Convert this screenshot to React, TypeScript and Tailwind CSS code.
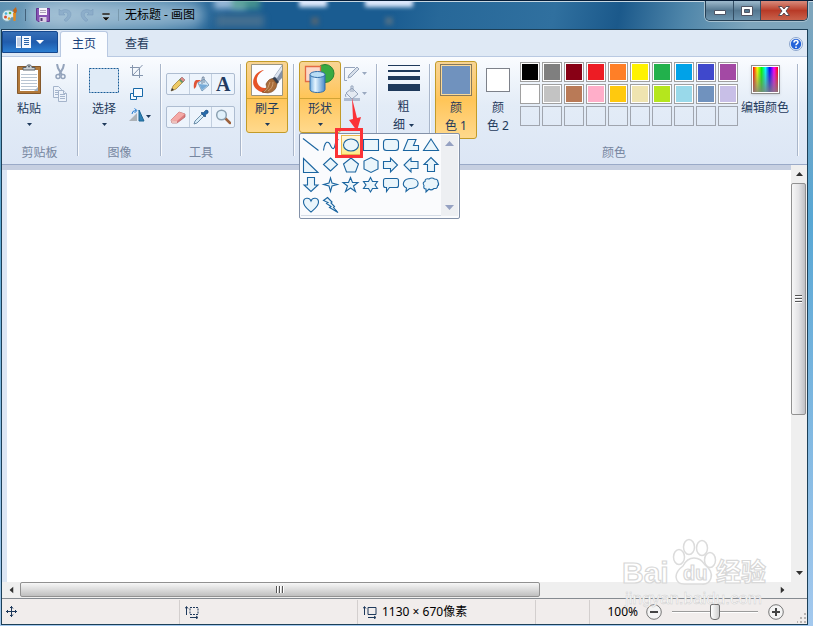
import type { ReactNode } from "react";
import clsx from "clsx";

const palette = [
  ["#000000", "#7f7f7f", "#880015", "#ed1c24", "#ff7f27", "#fff200", "#22b14c", "#00a2e8", "#3f48cc", "#a349a4"],
  ["#ffffff", "#c3c3c3", "#b97a57", "#ffaec9", "#ffc90e", "#efe4b0", "#b5e61d", "#99d9ea", "#7092be", "#c8bfe7"],
];

const shapes: { name: string; d: string; open?: boolean }[] = [
  { name: "直线", d: "M2 3.5L17.5 15.5", open: true },
  { name: "曲线", d: "M2.5 15.5C3 10 5 6 7.5 7.500C10 9 10 14.500 12.500 13.500C15 12.500 13 5 17.500 4.500", open: true },
  { name: "椭圆形", d: "M2.500 10a7.500 6 0 1 0 15 0a7.500 6 0 1 0 -15 0z" },
  { name: "矩形", d: "M2.500 4.500h15v11h-15z" },
  { name: "圆角矩形", d: "M5.500 4.500h9q3 0 3 3v5q0 3 -3 3h-9q-3 0 -3 -3v-5q0 -3 3 -3z" },
  { name: "多边形", d: "M2.500 15.500L7 4.500H15L12.500 10.500H17.500V15.500z" },
  { name: "三角形", d: "M10 4L17.500 15.500H2.500z" },
  { name: "直角三角形", d: "M2.500 3.500L17 17.500H2.500z" },
  { name: "菱形", d: "M9.500 3L16.500 9.500L9.500 16L2.500 9.500z" },
  { name: "五边形", d: "M10 3L17.500 9L14.500 17H5.500L2.500 9z" },
  { name: "六边形", d: "M10 2.500L17 6V14L10 17.500L3 14V6z" },
  { name: "右箭头", d: "M2.500 6.500H9.500V3L16.500 10L9.500 17V13.500H2.500z" },
  { name: "左箭头", d: "M17 6.500H10V3L3 10L10 17V13.500H17z" },
  { name: "上箭头", d: "M6.500 16.500V9.500H3L10 2.500L17 9.500H13.500V16.500z" },
  { name: "下箭头", d: "M6.500 2.500V10H3L10 16.500L17 10H13.500V2.500z" },
  { name: "四角星", d: "M9.500 3L11 8L16.500 9.500L11 11L9.500 16.500L8 11L2.500 9.500L8 8z" },
  { name: "五角星", d: "M9.500 2.500L11.500 7.500H17L12.500 11L14.500 16.500L9.500 13L4.500 16.500L6.500 11L2 7.500H7.500z" },
  { name: "六角星", d: "M9.500 2.500L11.500 6.500H16.500L14 10L16.500 13.500H11.500L9.500 17L7.500 13.500H2.500L5 10L2.500 6.500H7.500z" },
  { name: "圆角矩形标注", d: "M4.500 3.500h11q2 0 2 2v5q0 2 -2 2h-7l-3 4v-4h-1q-2 0 -2 -2v-5q0 -2 2 -2z" },
  { name: "椭圆形标注", d: "M5.500 13C0 10.500 2 3.500 10 3.500C19.500 3.500 19.500 13.500 10 13.500L8.500 13.500L5 16.500z" },
  { name: "云形标注", d: "M5 14Q2 14 3 10.500Q1 7.500 4 6.500Q4 3 8 4Q11 2 13.500 4Q17 4 17 7Q18.500 10 16.500 11Q16.500 14 13 13.500Q10 16 8 14L5 17z" },
  { name: "心形", d: "M10 17C6 13.500 2.500 11.500 2.500 7C2.500 2.500 8.500 2 10 6C11.500 2 17.500 2.500 17.500 7C17.500 11.500 14 13.500 10 17z" },
  { name: "闪电形", d: "M6.500 2.500L11 7L10 8L13.500 11.500L12.500 12.500L17 17.500L8.500 12.500L10 11.500L5.500 8.500L7 7.500L2.500 5.500z" },
];

function Caret({ className = "h-[3px] w-[5px]" }: { className?: string }) {
  return (
    <svg viewBox="0 0 6 3" preserveAspectRatio="none" className={className} fill="currentColor">
      <path d="M0 0h6L3 3z" />
    </svg>
  );
}

function Separator() {
  return <div className="mt-[3px] h-[92px] w-0.5 shrink-0 border-r border-l border-r-white/80 border-l-[#a9b6ca]" />;
}

function Group({ label, className, children }: { label?: string; className: string; children: ReactNode }) {
  return (
    <section className="flex h-[100px] shrink-0 flex-col justify-between">
      <div className={clsx("flex items-start", className)}>{children}</div>
      {label && <h2 className="text-center text-xs text-[#7686a0]">{label}</h2>}
    </section>
  );
}

function SplitButton({ label, children }: { label: string; children: ReactNode }) {
  return (
    <button className="flex h-[72px] w-[42px] flex-col items-center rounded-[3px] border border-[#c29b29] bg-linear-to-b from-[#f8d494] via-[#ffc558] to-[#ffd98c]">
      <span className="flex w-full justify-center border-b border-[#d0a336] py-0.5">{children}</span>
      <span className="mt-0.5 text-xs">{label}</span>
      <Caret className="mt-1.5 h-[3px] w-[5px]" />
    </button>
  );
}

function PaintLogo() {
  return (
    <svg viewBox="0 0 16 16" className="h-4 w-4">
      <path d="M6 3C2 3 0 6 0 9c0 4 3 6 7 5c2-.6 1-2 2-3c1-1 4 0 4-3c0-3-3-5-7-5z" fill="#d9edf2" stroke="#74a0b2" />
      <circle cx="4" cy="6.500" r="1.300" fill="#46b1d6" />
      <circle cx="8" cy="6" r="1.300" fill="#5cb249" />
      <circle cx="3.500" cy="10" r="1.500" fill="#d94f34" />
      <circle cx="7" cy="11.500" r="1.300" fill="#e5a62b" />
      <path d="M11 6h3l-.5 8h-2z" fill="#e28a20" />
      <path d="M12 6L11 3L14 0L15 4L14 6z" fill="#c26518" />
    </svg>
  );
}

function SaveIcon() {
  return (
    <svg viewBox="0 0 14 14" className="h-3.5 w-3.5">
      <path d="M.5.5h13v13H2L.5 12z" fill="#8754b4" stroke="#643690" />
      <path d="M3 0h8v7H3z" fill="#f6f2fa" />
      <path d="M4 2.500h6M4 4.500h6" stroke="#aaa0b8" />
      <path d="M3.500 9h7v5h-7z" fill="#d8cfe4" />
      <path d="M4.500 10h2v3h-2z" fill="#51336f" />
    </svg>
  );
}

function UndoIcon({ className }: { className?: string }) {
  return (
    <svg viewBox="0 0 14 14" className={clsx("h-3.5 w-3.5 opacity-70", className)}>
      <path d="M1 1v6h6L5 5c4-2 6 1 4 4l-3 3l2 1.500c6-4 6-9 3-11C8 1 5 1.500 3 3z" fill="#88a9c8" stroke="#6e92b5" strokeWidth=".6" />
    </svg>
  );
}

function WindowButtons() {
  return (
    <div className="ml-auto flex h-5 self-start overflow-hidden rounded-b-[5px] border border-t-0 border-[#253f55] shadow-[0_0_0_1px_#a7c1d0]">
      <button aria-label="最小化" className="flex w-7 items-center justify-center border-r border-[#344e64] bg-linear-to-b from-[#9fbbce] via-[#547790] to-[#6d94ae]">
        <svg viewBox="0 0 12 5" className="mt-1 h-[5px] w-3"><path d="M.5.5h11v4H.5z" fill="#fff" stroke="#505565" /></svg>
      </button>
      <button aria-label="最大化" className="flex w-[27px] items-center justify-center border-r border-[#344e64] bg-linear-to-b from-[#9fbbce] via-[#547790] to-[#6d94ae]">
        <svg viewBox="0 0 12 10" className="h-2.5 w-3"><path d="M.5.500h11v9H.5zM3.500 3.500v3h5v-3z" fill="#fff" fillRule="evenodd" stroke="#505565" /></svg>
      </button>
      <button aria-label="关闭" className="flex w-[46px] items-center justify-center bg-linear-to-b from-[#d88b7c] via-[#b83a27] to-[#c9614b]">
        <svg viewBox="0 0 12 10" className="h-2.5 w-3"><path d="M.5.500h3.500l2 2.500l2-2.500h3.500L8 5l3.500 4.500H8L6 7L4 9.500H.5L4 5z" fill="#fff" stroke="#5a4a52" /></svg>
      </button>
    </div>
  );
}

function TitleBar() {
  return (
    <header className="relative flex h-[29px] items-center overflow-hidden border-t border-[#061d38] bg-[linear-gradient(100deg,#5f92b3_0%,#7ba3bf_8%,#4f86ac_20%,#1a5c91_28%,#1a5c91_48%,#276899_54%,#30709f_68%,#1b598b_76%,#4f86aa_84%,#7ea5bc_92%)] pr-[5px] pl-0.5 shadow-[inset_0_1px_0_#c6d7e2]">
      <div className="absolute top-0.5 left-7 h-6 w-44 rounded-full bg-[#c7dce9]/50 blur-[6px]" />
      <div className="absolute -top-1 left-[214px] h-3 w-8 bg-[#b8d0ea]/80 blur-[3px]" />
      <div className="absolute -top-1 left-[232px] h-3 w-7 bg-[#4f9f8d]/80 blur-[3px]" />
      <div className="absolute top-3.5 left-[216px] h-3 w-12 bg-[#607b90]/60 blur-[3px]" />
      <div className="absolute -top-1 left-[299px] h-2.5 w-7 bg-[#dce8fc] blur-[2px]" />
      <div className="absolute -top-1 left-[365px] h-2.5 w-12 bg-[#dce8fc] blur-[2px]" />
      <div className="absolute top-4 left-[311px] h-2 w-2 bg-[#4a6478] blur-[2px]" />
      <div className="absolute top-4 left-[385px] h-2 w-2 bg-[#4a6e88] blur-[2px]" />
      <div className="relative flex h-full w-full items-center">
        <PaintLogo />
        <span className="ml-[7px] h-3 w-px bg-[#42617a]" />
        <div className="ml-2.5 flex items-center gap-2">
          <button aria-label="保存"><SaveIcon /></button>
          <button aria-label="撤消"><UndoIcon /></button>
          <button aria-label="重做"><UndoIcon className="-scale-x-100" /></button>
          <button aria-label="自定义快速访问工具栏">
            <svg viewBox="0 0 8 8" className="mt-1 h-2 w-2"><path d="M0 0h8v2H0zM0 4h8L4 8z" fill="#111" stroke="#dce8ef" strokeWidth=".5" /></svg>
          </button>
        </div>
        <span className="ml-2 h-3 w-px bg-[#7898ad]" />
        <h1 className="ml-1.5 text-xs text-black">无标题 - 画图</h1>
        <WindowButtons />
      </div>
    </header>
  );
}

function TabRow() {
  return (
    <nav className="flex h-[27px] border-b border-[#b9c9e2] bg-[#dfe9f5] pt-px">
      <button aria-label="画图菜单" className="flex h-[22px] w-14 items-center justify-center gap-[5px] rounded-tr-xs border border-[#16488e] bg-linear-to-b from-[#366fb7] via-[#205cac] to-[#2c7fd2] text-white">
        <svg viewBox="0 0 15 12" className="h-3 w-[15px]">
          <path d="M0 0h15v12H0z" fill="#f5f9ff" />
          <path d="M1 1.500h4v9H1z" fill="#bdcde5" />
          <path d="M5.500 0v12M8 2.500h5M8 4.500h5M8 6.500h5M8 8.500h5" stroke="#2b64a8" />
        </svg>
        <Caret className="h-1 w-2" />
      </button>
      <button className="-mb-px ml-0.5 w-12 rounded-t-[3px] border border-b-0 border-[#b9c9e2] bg-[#fafcff] pb-px text-xs text-[#163f7a]">主页</button>
      <button className="ml-1 w-[50px] text-xs">查看</button>
      <button aria-label="帮助" className="mr-1 ml-auto">
        <svg viewBox="0 0 14 14" className="h-3.5 w-3.5">
          <circle cx="7" cy="7" r="6.500" fill="#eef4fc" stroke="#8ca5cc" />
          <circle cx="7" cy="7" r="5.200" fill="#2463d9" />
          <path d="M5 5.500C5 3 9 3 9 5.200C9 6.700 7 6.500 7 8.300" fill="none" stroke="#fff" strokeWidth="1.500" />
          <path d="M6.200 9.500h1.600v1.500H6.200z" fill="#fff" />
        </svg>
      </button>
    </nav>
  );
}

function ClipboardGroup() {
  return (
    <Group label="剪贴板" className="w-[75px] pl-2">
      <button className="flex w-[38px] flex-col items-center pt-[3px] text-xs">
        <svg viewBox="0 0 26 32" className="h-8 w-[26px]">
          <path d="M1.500 2.500h23v27h-23z" fill="#b2793a" stroke="#85592b" />
          <path d="M4 6h18v21H4z" fill="#fff" />
          <path d="M5 10.500h16M5 13.500h16M5 16.500h16M5 19.500h16M5 22.500h16M5 25.500h16" stroke="#b9c5d2" />
          <path d="M18 27l4-4v4z" fill="#9dafc2" />
          <path d="M7 6V3.500h3C10 0 16 0 16 3.500h3V6z" fill="#c9d0d6" stroke="#59636c" />
          <circle cx="13" cy="2.500" r="1" fill="#59636c" />
        </svg>
        <span className="mt-[5px]">粘贴</span>
        <Caret className="mt-1.5 h-[3px] w-[5px]" />
      </button>
      <div className="ml-1 flex flex-col gap-1.5 pt-[3px]">
        <button aria-label="剪切">
          <svg viewBox="0 0 16 16" className="h-4 w-4" fill="none" stroke="#94a3bb" strokeWidth="1.500">
            <path d="M5 0L6 4L10 11M12 0L11 4L7 11" strokeWidth="2" />
            <circle cx="6" cy="12.500" r="2" /><circle cx="11" cy="12.500" r="2" />
          </svg>
        </button>
        <button aria-label="复制">
          <svg viewBox="0 0 16 16" className="h-4 w-4" fill="#edf3fb" stroke="#a4b4cb">
            <path d="M1.500.5h5l3 3v8h-8z" /><path d="M3 4.500h3M3 6.500h3M3 8.500h3" />
            <path d="M6.500 4.500h5l3 3v8h-8z" /><path d="M8 8.500h5M8 10.500h5M8 12.500h5M11.500 4.500v3h3" />
          </svg>
        </button>
      </div>
    </Group>
  );
}

function ImageGroup() {
  return (
    <Group label="图像" className="w-[81px] pl-[7px]">
      <button className="flex w-9 flex-col items-center pt-[3px] text-xs">
        <svg viewBox="0 0 32 32" className="h-8 w-8">
          <path d="M1.500 4.500h29v24h-29z" fill="#e0ebf7" stroke="#175b96" strokeDasharray="2 1" />
        </svg>
        <span className="mt-[5px]">选择</span>
        <Caret className="mt-1.5 h-[3px] w-[5px]" />
      </button>
      <div className="ml-[7px] flex flex-col gap-1.5 pt-[3px]">
        <button aria-label="裁剪">
          <svg viewBox="0 0 16 16" className="h-4 w-4" fill="none" stroke="#8696ae">
            <path d="M3.500 1v10.500H14M1 3.500h9.500V14M4 11L13.500 1" />
          </svg>
        </button>
        <button aria-label="重新调整大小">
          <svg viewBox="0 0 16 16" className="h-4 w-4" fill="#f6fbff" stroke="#1768a8">
            <path d="M1.500 7.500h6v6h-6z" /><path d="M4.500 2.500h9v8h-9z" />
          </svg>
        </button>
        <button aria-label="旋转" className="flex items-center gap-px">
          <svg viewBox="0 0 16 16" className="h-4 w-4">
            <path d="M0 13h8V5z" fill="#adb2b7" />
            <path d="M10 2v11h5z" fill="#2e81b5" stroke="#1c6594" />
            <path d="M3 6Q3 2.500 7 2.500M5.500.500L8 2.500L5.500 5" fill="none" stroke="#247bd1" />
          </svg>
          <Caret />
        </button>
      </div>
    </Group>
  );
}

const tools: { name: string; art?: ReactNode; letter?: string }[] = [
  {
    name: "铅笔",
    art: (
      <>
        <path d="M1 15L3 10L11 2L14 5L6 13z" fill="#edcb68" stroke="#9c752c" strokeWidth=".7" />
        <path d="M10 3L12 1L15 4L13 6z" fill="#df8a86" stroke="#8d6969" strokeWidth=".6" />
        <path d="M9.500 3.500L12.500 6.500" stroke="#55956d" strokeWidth="1.500" />
        <path d="M1 15L2 12L4 14z" fill="#343742" />
      </>
    ),
  },
  {
    name: "用颜色填充",
    art: (
      <>
        <path d="M5 7L11 3L16 9L9 15z" fill="#d0e4f3" stroke="#6289ac" strokeWidth=".8" />
        <path d="M6 8L15 9L9 14z" fill="#75aad8" />
        <path d="M9 8V3Q9 0 11 1V7" fill="none" stroke="#7588a0" />
        <path d="M8 4L3 4Q0 6 1 13L3 11L4 7z" fill="#df5437" />
      </>
    ),
  },
  { name: "文本", letter: "A" },
  {
    name: "橡皮擦",
    art: (
      <>
        <path d="M1 11L9 3L15 5L15 8L7 14L2 14z" fill="#dc7c7d" stroke="#b05e62" strokeWidth=".7" />
        <path d="M1 11L9 3L15 5L7 12z" fill="#f5a9a6" />
        <path d="M7 12V14L2 14L1 11z" fill="#edc1bc" />
      </>
    ),
  },
  {
    name: "颜色选取器",
    art: (
      <>
        <path d="M1 15L2 12L9 5L11 7L4 14z" fill="#d7edf9" stroke="#517695" strokeWidth=".8" />
        <path d="M8 4L9 3L10 4L13 1Q16 1 15 4L12 6L13 7L12 8z" fill="#246aab" stroke="#164577" strokeWidth=".6" />
      </>
    ),
  },
  {
    name: "放大镜",
    art: (
      <>
        <path d="M10 9L15 14" stroke="#9d623d" strokeWidth="2.500" strokeLinecap="round" />
        <circle cx="6.500" cy="6" r="4.800" fill="#e1f1fb" stroke="#8ba1b1" strokeWidth="1.500" />
      </>
    ),
  },
];

function ToolsGroup() {
  return (
    <Group label="工具" className="w-[78px] pl-1">
      <div className="flex flex-col gap-[11px] pt-3">
        {[tools.slice(0, 3), tools.slice(3)].map((row, i) => (
          <div key={i} className="flex h-[22px] w-[69px] divide-x divide-[#c2cfdf] rounded-xs border border-[#aebdd1] bg-[#edf4fc]">
            {row.map((tool) => (
              <button key={tool.name} aria-label={tool.name} className="flex flex-1 items-center justify-center">
                {tool.letter ? (
                  <span className="font-['Liberation_Serif',serif] text-xl leading-5 font-bold text-[#223a60]">{tool.letter}</span>
                ) : (
                  <svg viewBox="0 0 16 16" className="h-4 w-4">{tool.art}</svg>
                )}
              </button>
            ))}
          </div>
        ))}
      </div>
    </Group>
  );
}

function BrushGroup() {
  return (
    <Group className="w-[51px] pl-1">
      <SplitButton label="刷子">
        <svg viewBox="0 0 32 32" className="h-8 w-8">
          <path d="M.5.5h31v31H.5z" fill="#fbfcff" stroke="#9c957f" />
          <path d="M13 6C5 7 0 16 3 22C5 26 10 28 13 29C19 29 21 24 15 24C8 25 5 18 6 14C7 10 10 8 13 6z" fill="#e65328" />
          <path d="M22 14L31 1V14L26 19z" fill="#8391a8" />
          <path d="M23 13L31 2V6L26 14z" fill="#dce4f0" />
          <path d="M20 15L24 13L28 18L25 21z" fill="#343f50" />
          <path d="M11 28Q17 26 15 20Q18 14 22 15L26 20Q25 28 17 29z" fill="#a96d3b" stroke="#774c2a" strokeWidth=".6" />
          <path d="M13 28Q18 24 19 18M17 27Q22 24 22 18" fill="none" stroke="#d1a071" />
        </svg>
      </SplitButton>
    </Group>
  );
}

function ShapesMenu() {
  return (
    <div role="menu" aria-label="形状" className="absolute top-[72px] left-0 z-10 flex w-[161px] rounded-xs border border-[#8391a8] bg-[#fafbfd] pt-px pr-px pb-0.5 pl-px">
      <div className="grid w-[140px] auto-rows-[20px] grid-cols-7 border-b border-[#d5dce6]">
        {shapes.map((shape, i) => (
          <button
            key={shape.name}
            role="menuitem"
            aria-label={shape.name}
            className={clsx(i === 2 && "bg-linear-to-b from-[#fff8e6] to-[#ffeb82] ring-1 ring-[#eab84d] ring-inset")}
          >
            <svg viewBox="0 0 20 20" className="h-5 w-5">
              <path d={shape.d} fill={shape.open ? "none" : "#eaf5fb"} stroke="#1b65a0" strokeWidth="1.100" />
            </svg>
          </button>
        ))}
      </div>
      <div className="flex flex-1 flex-col items-center justify-between bg-[#edeff2] py-1.5 text-[#95a1c2]">
        <button aria-label="向上滚动"><Caret className="h-[5px] w-[9px] rotate-180" /></button>
        <button aria-label="向下滚动"><Caret className="h-[5px] w-[9px]" /></button>
      </div>
    </div>
  );
}

function ShapesGroup() {
  return (
    <Group className="w-[81px] pl-1">
      <div className="relative">
        <SplitButton label="形状">
          <svg viewBox="0 0 32 32" className="h-8 w-8">
            <defs>
              <linearGradient id="cylinder">
                <stop stopColor="#73aee0" /><stop offset=".35" stopColor="#e6f5ff" /><stop offset="1" stopColor="#4688c9" />
              </linearGradient>
            </defs>
            <circle cx="21" cy="9.500" r="9" fill="#39aa42" stroke="#278332" />
            <path d="M1.500 2.500h15v15h-15z" fill="#fbd8c9" stroke="#e36b44" strokeWidth="1.300" />
            <path d="M6 10.500v15c0 4 15 4 15 0v-15z" fill="url(#cylinder)" stroke="#336da8" />
            <ellipse cx="13.500" cy="10.500" rx="7.500" ry="3" fill="#b9ddf5" stroke="#336da8" />
          </svg>
        </SplitButton>
        <ShapesMenu />
        {/* callout on the ellipse tool */}
        <div className="absolute top-[67px] left-9 z-20 h-[30px] w-7 border-[3px] border-[#fb3237]" />
        <svg viewBox="0 0 16 34" className="absolute top-[37px] left-[49px] z-20 h-[34px] w-4">
          <path d="M4 0L9 20L13 19L9 33L1 22L5 21z" fill="#fb3237" />
        </svg>
      </div>
      <div className="ml-[3px] flex flex-col gap-1 pt-1 text-[#9aa9c0]">
        <button aria-label="形状轮廓" className="flex items-center gap-0.5">
          <svg viewBox="0 0 16 16" className="h-4 w-4" fill="none" stroke="#94a3bb">
            <path d="M11 2.500H.5v13H3" /><path d="M4 13L5 10L13 2L15 4L7 12z" fill="#d7dfea" />
          </svg>
          <Caret />
        </button>
        <button aria-label="形状填充" className="flex items-center gap-0.5">
          <svg viewBox="0 0 16 16" className="h-4 w-4" stroke="#94a3bb">
            <path d="M0 13h16v3H0z" fill="#aebbd0" stroke="none" />
            <path d="M2 8L8 3L14 9L8 14z" fill="#e4eaf2" /><path d="M7 7V1h2v6M3 8Q0 10 2 12" fill="none" />
          </svg>
          <Caret />
        </button>
      </div>
    </Group>
  );
}

function SizeGroup() {
  return (
    <Group className="w-[51px]">
      <button className="flex w-full flex-col items-center pt-1 text-xs leading-[18px]">
        <span className="flex w-8 flex-col gap-1">
          <span className="h-px bg-[#1e395b]" />
          <span className="h-0.5 bg-[#1e395b]" />
          <span className="h-1 bg-[#1e395b]" />
          <span className="h-[7px] bg-[#1e395b]" />
        </span>
        <span className="mt-[7px]">粗</span>
        <span className="flex items-center gap-1">细<Caret /></span>
      </button>
    </Group>
  );
}

function ColorsGroup() {
  return (
    <Group label="颜色" className="w-[366px] pl-1">
      <button className="flex h-[78px] w-[42px] flex-col items-center rounded-[3px] border border-[#c29b29] bg-linear-to-b from-[#f8d494] via-[#ffc558] to-[#ffd98c] pt-0.5 text-xs leading-[18px]">
        <span className="h-8 w-8 border border-[#86795c] bg-[#fbd997] p-px"><span className="block h-full bg-[#7092be]" /></span>
        <span className="mt-[3px]">颜</span>
        <span>色 1</span>
      </button>
      <button className="flex w-[42px] flex-col items-center pt-[7px] text-xs leading-[18px]">
        <span className="h-6 w-6 border border-[#7d818a] bg-white" />
        <span className="mt-[7px]">颜</span>
        <span>色 2</span>
      </button>
      <div className="ml-px grid grid-cols-10 gap-0.5 pt-px">
        {palette.flat().map((color) => (
          <button key={color} aria-label={color} className="h-5 w-5 border border-[#a0a0a0] bg-white p-px">
            <span className="block h-full" style={{ backgroundColor: color }} />
          </button>
        ))}
        {Array.from({ length: 10 }, (_, i) => (
          <button key={i} aria-label="空白颜色" className="h-5 w-5 border border-[#a0a5ae]" />
        ))}
      </div>
      <button className="ml-[3px] flex w-12 shrink-0 flex-col items-center pt-1 text-xs whitespace-nowrap">
        <span className="h-[29px] w-[29px] border border-[#8e8e8e] bg-white p-px shadow-sm">
          <svg viewBox="0 0 25 25" className="h-full w-full">
            <defs>
              <linearGradient id="hues">
                <stop stopColor="#f00" /><stop offset=".17" stopColor="#ff0" /><stop offset=".34" stopColor="#0f0" />
                <stop offset=".5" stopColor="#0ff" /><stop offset=".67" stopColor="#00f" />
                <stop offset=".84" stopColor="#f0f" /><stop offset="1" stopColor="#f00" />
              </linearGradient>
              <linearGradient id="fade" x2="0" y2="1">
                <stop stopColor="#808080" stopOpacity="0" /><stop offset="1" stopColor="#808080" stopOpacity=".85" />
              </linearGradient>
            </defs>
            <path d="M0 0h25v25H0z" fill="url(#hues)" /><path d="M0 0h25v25H0z" fill="url(#fade)" />
          </svg>
        </span>
        <span className="mt-1.5">编辑颜色</span>
      </button>
    </Group>
  );
}

function Ribbon() {
  return (
    <div className="flex border-b border-[#9aaac8] bg-linear-to-b from-[#fafcff] via-[#e3ecf7] via-45% to-[#dce6f5] pt-1 pb-[3px]">
      <ClipboardGroup />
      <Separator />
      <ImageGroup />
      <Separator />
      <ToolsGroup />
      <Separator />
      <BrushGroup />
      <Separator />
      <ShapesGroup />
      <Separator />
      <SizeGroup />
      <Separator />
      <ColorsGroup />
      <Separator />
    </div>
  );
}

function VerticalScrollbar() {
  return (
    <div className="flex w-4 flex-col items-center bg-[#efefef] text-[#303030]">
      <button aria-label="向上" className="flex h-[18px] w-full items-center justify-center"><Caret className="h-1 w-[7px] rotate-180" /></button>
      <div className="w-full flex-1">
        <div className="flex h-[61%] w-[15px] flex-col items-center justify-center gap-px rounded-xs border border-[#919191] bg-linear-to-r from-[#f7f7f7] via-[#e4e4e6] to-[#bfc0c5]">
          <span className="h-0.5 w-[7px] border-t border-[#555] bg-white" />
          <span className="h-0.5 w-[7px] border-t border-[#555] bg-white" />
          <span className="h-0.5 w-[7px] border-t border-[#555] bg-white" />
        </div>
      </div>
      <button aria-label="向下" className="flex h-[18px] w-full items-center justify-center"><Caret className="h-1 w-[7px]" /></button>
    </div>
  );
}

function HorizontalScrollbar() {
  return (
    <div className="flex h-4 bg-[#efefef] text-[#303030]">
      <button aria-label="向左" className="flex w-[18px] items-center justify-center"><Caret className="h-1 w-[7px] rotate-90" /></button>
      <div className="flex-1">
        <div className="flex h-[15px] w-[69%] items-center justify-center gap-px rounded-xs border border-[#919191] bg-linear-to-b from-[#f7f7f7] via-[#dcdcdc] to-[#bfbfbf]">
          <span className="h-[7px] w-0.5 border-l border-[#555] bg-white" />
          <span className="h-[7px] w-0.5 border-l border-[#555] bg-white" />
          <span className="h-[7px] w-0.5 border-l border-[#555] bg-white" />
        </div>
      </div>
      <button aria-label="向右" className="mr-4 flex w-[18px] items-center justify-center"><Caret className="h-1 w-[7px] -rotate-90" /></button>
    </div>
  );
}

function ZoomButton({ label, d }: { label: string; d: string }) {
  return (
    <button aria-label={label}>
      <svg viewBox="0 0 16 16" className="h-4 w-4">
        <circle cx="8" cy="8" r="7.300" fill="#f4f4f4" stroke="#777" />
        <path d={d} stroke="#444" strokeWidth="2" />
      </svg>
    </button>
  );
}

function StatusBar() {
  return (
    <footer className="flex h-[26px] border-t border-[#858b91] bg-[#f1edec] pt-px text-xs text-black">
      <div className="flex w-[178px] items-center border-r border-[#d3cfce] pl-1">
        <svg viewBox="0 0 12 12" className="h-3 w-3" fill="none" stroke="#1e395b">
          <path d="M5.500 0v11M0 5.500h11M4 2l1.500-1.500l1.500 2M4 9l1.500 1.500l1.500-2M2 4l-1.500 1.500l1.500 1.500M9 4l1.500 1.500l-1.500 1.500" />
        </svg>
      </div>
      <div className="flex w-[178px] items-center border-r border-[#d3cfce] pl-[5px]">
        <svg viewBox="0 0 14 14" className="h-3.5 w-3.5" fill="none" stroke="#1e395b">
          <path d="M1.500 10V2M0 3.500l1.500-2l1.500 2M5 12.500h7M11 11l2 1.500l-2 1.500" /><path d="M5 2.500h8v7H5z" strokeDasharray="2 1" />
        </svg>
      </div>
      <div className="flex w-[178px] items-center gap-[5px] border-r border-[#d3cfce] pl-[5px]">
        <svg viewBox="0 0 14 14" className="h-3.5 w-3.5" fill="none" stroke="#1e395b">
          <path d="M1.500 10V2M0 3.500l1.500-2l1.500 2M5 12.500h7M11 11l2 1.500l-2 1.500M5 2.500h8v7H5z" />
        </svg>
        <span>1130 × 670像素</span>
      </div>
      <div className="w-[54px] border-r border-[#d3cfce]" />
      <div className="ml-auto flex items-center">
        <label htmlFor="zoom">100%</label>
        <div className="ml-2 flex items-center gap-2.5">
          <ZoomButton label="缩小" d="M4 8h8" />
          <input
            id="zoom"
            type="range"
            defaultValue={50}
            className="h-4 w-[86px] appearance-none bg-transparent [&::-webkit-slider-runnable-track]:h-0.5 [&::-webkit-slider-runnable-track]:border-t [&::-webkit-slider-runnable-track]:border-[#9b9b9b] [&::-webkit-slider-runnable-track]:bg-white [&::-webkit-slider-thumb]:-mt-2 [&::-webkit-slider-thumb]:h-4 [&::-webkit-slider-thumb]:w-2.5 [&::-webkit-slider-thumb]:appearance-none [&::-webkit-slider-thumb]:rounded-t-xs [&::-webkit-slider-thumb]:rounded-b-[4px] [&::-webkit-slider-thumb]:border [&::-webkit-slider-thumb]:border-[#6f6f6f] [&::-webkit-slider-thumb]:bg-linear-to-r [&::-webkit-slider-thumb]:from-white [&::-webkit-slider-thumb]:to-[#cfcfcf]"
          />
          <ZoomButton label="放大" d="M4 8h8M8 4v8" />
        </div>
        <svg viewBox="0 0 10 10" className="mb-px ml-[13px] h-2.5 w-2.5 self-end" fill="#b8b4b2">
          <path d="M7 0h2v2H7zM7 4h2v2H7zM7 8h2v2H7zM3 4h2v2H3zM3 8h2v2H3zM0 8h1v2H0z" />
        </svg>
      </div>
    </footer>
  );
}

function Watermark() {
  return (
    <svg viewBox="0 0 150 76" className="pointer-events-none absolute right-[43px] bottom-[12px] h-[76px] w-[150px]">
      <g fill="#fff" fillOpacity=".85" stroke="#dcdcdc" strokeWidth="1.500">
        <ellipse cx="59" cy="19" rx="5.500" ry="7.500" />
        <ellipse cx="69" cy="9" rx="5.500" ry="7.500" />
        <ellipse cx="82" cy="10" rx="5.500" ry="7.500" />
        <ellipse cx="90" cy="22" rx="5.500" ry="7.500" />
        <path d="M74 20Q81 20 85 27Q93 33 91 40Q89 47 81 46H66Q57 47 56 39Q56 33 63 28Q67 20 74 20z" />
      </g>
      <g fontFamily="Liberation Sans, Noto Sans CJK SC, sans-serif" fontWeight="bold" fill="#fff" stroke="#d8d8d8" strokeWidth="1.200">
        <text x="2" y="45" fontSize="30">Bai</text>
        <text x="63" y="42" fontSize="20">du</text>
        <text x="96" y="43" fontSize="25">经验</text>
      </g>
      <text x="5" y="66" fontFamily="Liberation Sans, sans-serif" fontSize="17" fill="#fff" stroke="#cfcfcf" strokeWidth=".5">jingyan.baidu.com</text>
    </svg>
  );
}

export default function App() {
  return (
    <div className="relative flex h-screen flex-col bg-linear-to-b from-[#7ea5bc] via-[#58a7d4] via-35% to-[#a4c9ee] font-['Noto_Sans','Noto_Sans_CJK_SC',sans-serif] text-[#1e395b]">
      <TitleBar />
      <main className="mr-[5px] mb-px ml-px flex min-h-0 flex-1 flex-col border border-[#1c3f57]">
        <TabRow />
        <Ribbon />
        <div className="flex min-h-0 flex-1 bg-[#dce6f4]">
          <div className="flex flex-1 flex-col">
            <div className="h-[5px] bg-[#c6cfe1]" />
            <div className="ml-[5px] flex-1 bg-white" />
          </div>
          <VerticalScrollbar />
        </div>
        <HorizontalScrollbar />
        <StatusBar />
      </main>
      <Watermark />
    </div>
  );
}
